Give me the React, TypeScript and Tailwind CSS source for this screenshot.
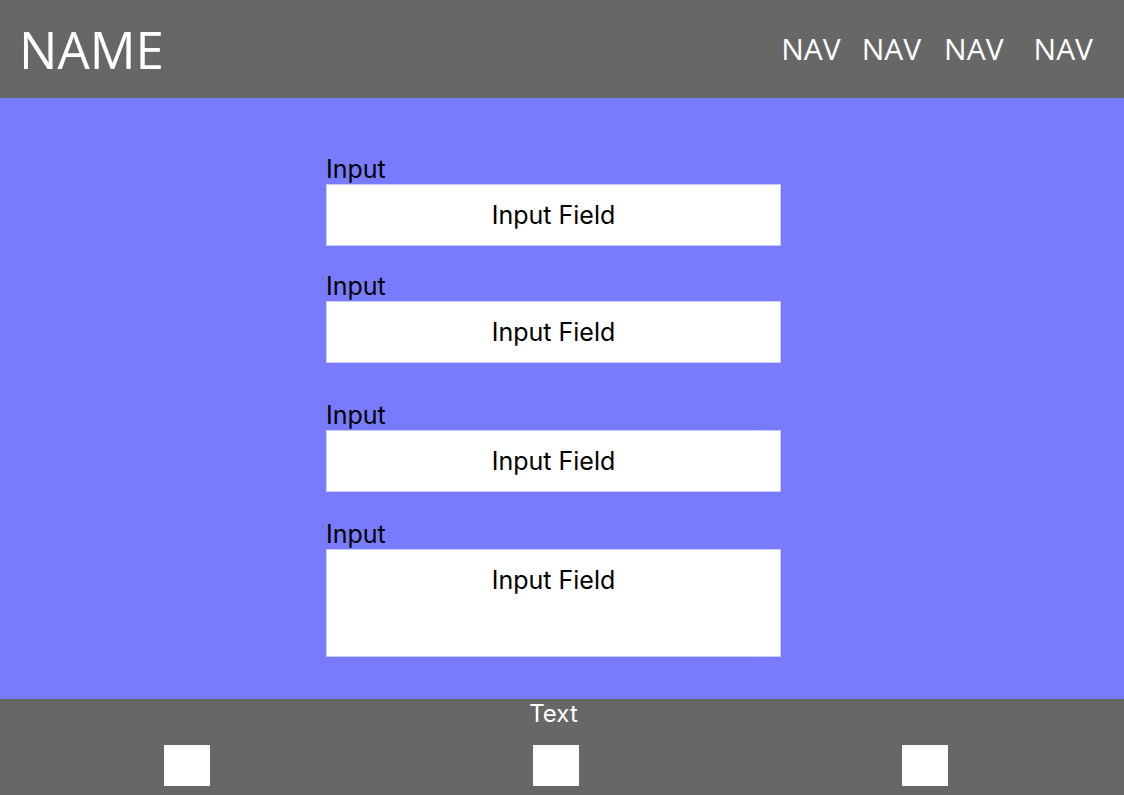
const fields = [
  { mt: "mt-[56px]", tall: false },
  { mt: "mt-[25px]", tall: false },
  { mt: "mt-[37px]", tall: false },
  { mt: "mt-[27px]", tall: true },
];

function Field({ mt, tall }: { mt: string; tall: boolean }) {
  return (
    <div className={mt}>
      <p className="text-[25px] leading-[30px] text-black">Input</p>
      <div
        className={`w-[455px] bg-white border border-[#c9cbfd] text-center text-[25px] text-black ${
          tall ? "h-[108px]" : "h-[62px]"
        }`}
      >
        <div className="h-[62px] flex items-center justify-center">Input Field</div>
      </div>
    </div>
  );
}

export default function App() {
  return (
    <div className="w-[1124px] h-[795px] flex flex-col [font-family:Inter,sans-serif]">
      {/* HEADER */}
      <header className="h-[98px] shrink-0 bg-[#676767] flex items-center justify-between pl-[19px] pr-[31px] text-white [font-family:'Open_Sans',sans-serif]">
        <h1 className="text-[51px] leading-none">NAME</h1>
        <nav className="flex items-center text-[30px] leading-none">
          <span>NAV</span>
          <span className="ml-[21px]">NAV</span>
          <span className="ml-[23px]">NAV</span>
          <span className="ml-[30px]">NAV</span>
        </nav>
      </header>

      {/* FORM */}
      <main className="h-[601px] shrink-0 bg-[#787cfc] pl-[326px]">
        {fields.map((f, i) => (
          <Field key={i} mt={f.mt} tall={f.tall} />
        ))}
      </main>

      {/* FOOTER */}
      <footer className="flex-1 bg-[#676767]">
        <p className="text-center text-white text-[24px] leading-[29px] pr-[17px]">Text</p>
        <div className="mt-[17px] flex pl-[164px] gap-[323px]">
          <div className="w-[46px] h-[41px] bg-white" />
          <div className="w-[46px] h-[41px] bg-white" />
          <div className="w-[46px] h-[41px] bg-white" />
        </div>
      </footer>
    </div>
  );
}
